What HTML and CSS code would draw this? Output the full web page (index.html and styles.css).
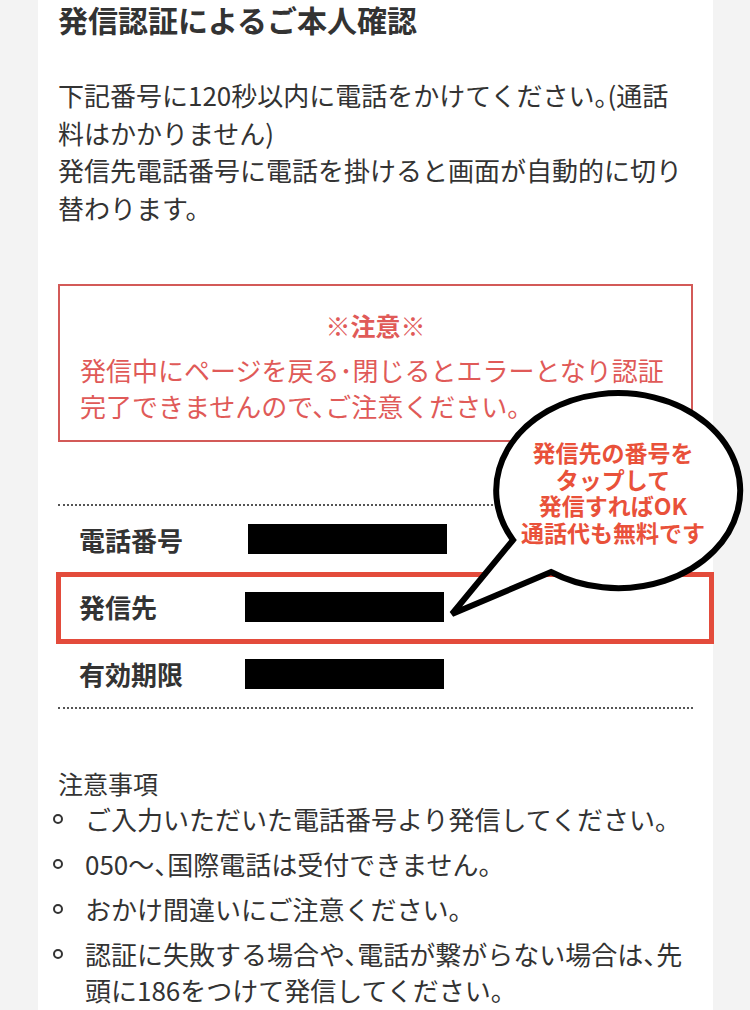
FILE: index.html
```html
<!DOCTYPE html>
<html lang="ja">
<head>
<meta charset="utf-8">
<title>発信認証によるご本人確認</title>
<link rel="stylesheet" href="styles.css">
</head>
<body>
<main class="card">
  <h1 class="title">発信認証によるご本人確認</h1>
  <p class="lead">下記番号に120秒以内に電話をかけてください。(通話料はかかりません)<br>発信先電話番号に電話を掛けると画面が自動的に切り替わります。</p>

  <section class="warn">
    <h2 class="warn-title">※注意※</h2>
    <p class="warn-text">発信中にページを戻る･閉じるとエラーとなり認証完了できませんので、ご注意ください。</p>
  </section>

  <div class="info">
    <div class="row">
      <span class="label">電話番号</span>
      <span class="mask mask-first"></span>
    </div>
    <div class="row">
      <span class="label">発信先</span>
      <span class="mask"></span>
    </div>
    <div class="row">
      <span class="label">有効期限</span>
      <span class="mask"></span>
    </div>
    <div class="highlight"></div>
  </div>

  <div class="notes">
    <p class="notes-title">注意事項</p>
    <ul class="notes-list">
      <li><span class="dot"></span><span>ご入力いただいた電話番号より発信してください。</span></li>
      <li><span class="dot"></span><span>050～、国際電話は受付できません。</span></li>
      <li><span class="dot"></span><span>おかけ間違いにご注意ください。</span></li>
      <li><span class="dot"></span><span>認証に失敗する場合や、電話が繋がらない場合は、先頭に186をつけて発信してください。</span></li>
    </ul>
  </div>
</main>

<div class="bubble">
  <svg class="bubble-shape" width="310" height="240" viewBox="0 0 310 240">
    <path d="M73 155 L12 229 L111 187 A122 97.5 0 1 0 73 155 Z" fill="#fff" stroke="#000" stroke-width="6" stroke-linejoin="miter"/>
  </svg>
  <div class="bubble-text">発信先の番号を<br>タップして<br>発信すればOK<br>通話代も無料です</div>
</div>
</body>
</html>
```

FILE: styles.css
```css
* { box-sizing: border-box; }

html, body {
  margin: 0;
  padding: 0;
}

body {
  background: #f3f3f3;
  font-family: "Noto Sans CJK JP", "Noto Sans", sans-serif;
  color: #333;
  position: relative;
  height: 1010px;
  overflow: hidden;
}

.card {
  width: 675px;
  margin-left: 38px;
  background: #fff;
  padding: 0 20px 40px;
  min-height: 1010px;
}

.title {
  margin: 0;
  padding-top: 1px;
  font-size: 30px;
  line-height: 36px;
  font-weight: 700;
  color: #333;
}

.lead {
  margin: 39px 0 0;
  font-size: 26px;
  line-height: 37.5px;
  color: #333;
  font-feature-settings: "halt";
}

.warn {
  margin-top: 58px;
  border: 2px solid #d35a58;
  padding: 21px 20px 16px;
  color: #e05a58;
}

.warn-title {
  margin: 0 0 8px;
  text-align: center;
  font-size: 25px;
  line-height: 37px;
  font-weight: 700;
}

.warn-text {
  margin: 0;
  font-size: 26px;
  line-height: 36px;
  font-feature-settings: "halt";
}

.info {
  position: relative;
  margin-top: 62px;
  border-top: 2px dotted #555;
  border-bottom: 2px dotted #555;
}

.row {
  display: flex;
  align-items: center;
  height: 67px;
  padding-left: 21px;
}

.label {
  width: 166px;
  font-size: 26px;
  font-weight: 700;
  color: #333;
}

.mask {
  display: block;
  width: 199px;
  height: 30px;
  background: #000;
}

.mask-first {
  margin-left: 3px;
  margin-top: -2px;
}

.highlight {
  position: absolute;
  left: -2px;
  top: 66px;
  width: 658px;
  height: 72px;
  border: 5px solid #e34b3b;
}

.notes {
  margin-top: 56px;
}

.notes-title {
  margin: 0;
  font-size: 25px;
  line-height: 36px;
  color: #333;
}

.notes-list {
  list-style: none;
  margin: 0;
  padding: 0;
}

.notes-list li {
  display: flex;
  align-items: flex-start;
  font-size: 26px;
  line-height: 36px;
  margin-bottom: 9px;
  font-feature-settings: "halt";
}

.dot {
  flex: none;
  width: 10px;
  height: 10px;
  margin: 13px 22px 0 -5px;
  border: 2px solid #333;
  border-radius: 50%;
}

.bubble {
  position: absolute;
  left: 440px;
  top: 385px;
  width: 310px;
  height: 240px;
}

.bubble-shape {
  display: block;
}

.bubble-text {
  position: absolute;
  left: 53px;
  top: 54px;
  width: 240px;
  text-align: center;
  font-size: 23px;
  line-height: 26.5px;
  font-weight: 700;
  color: #e9513a;
}
```
